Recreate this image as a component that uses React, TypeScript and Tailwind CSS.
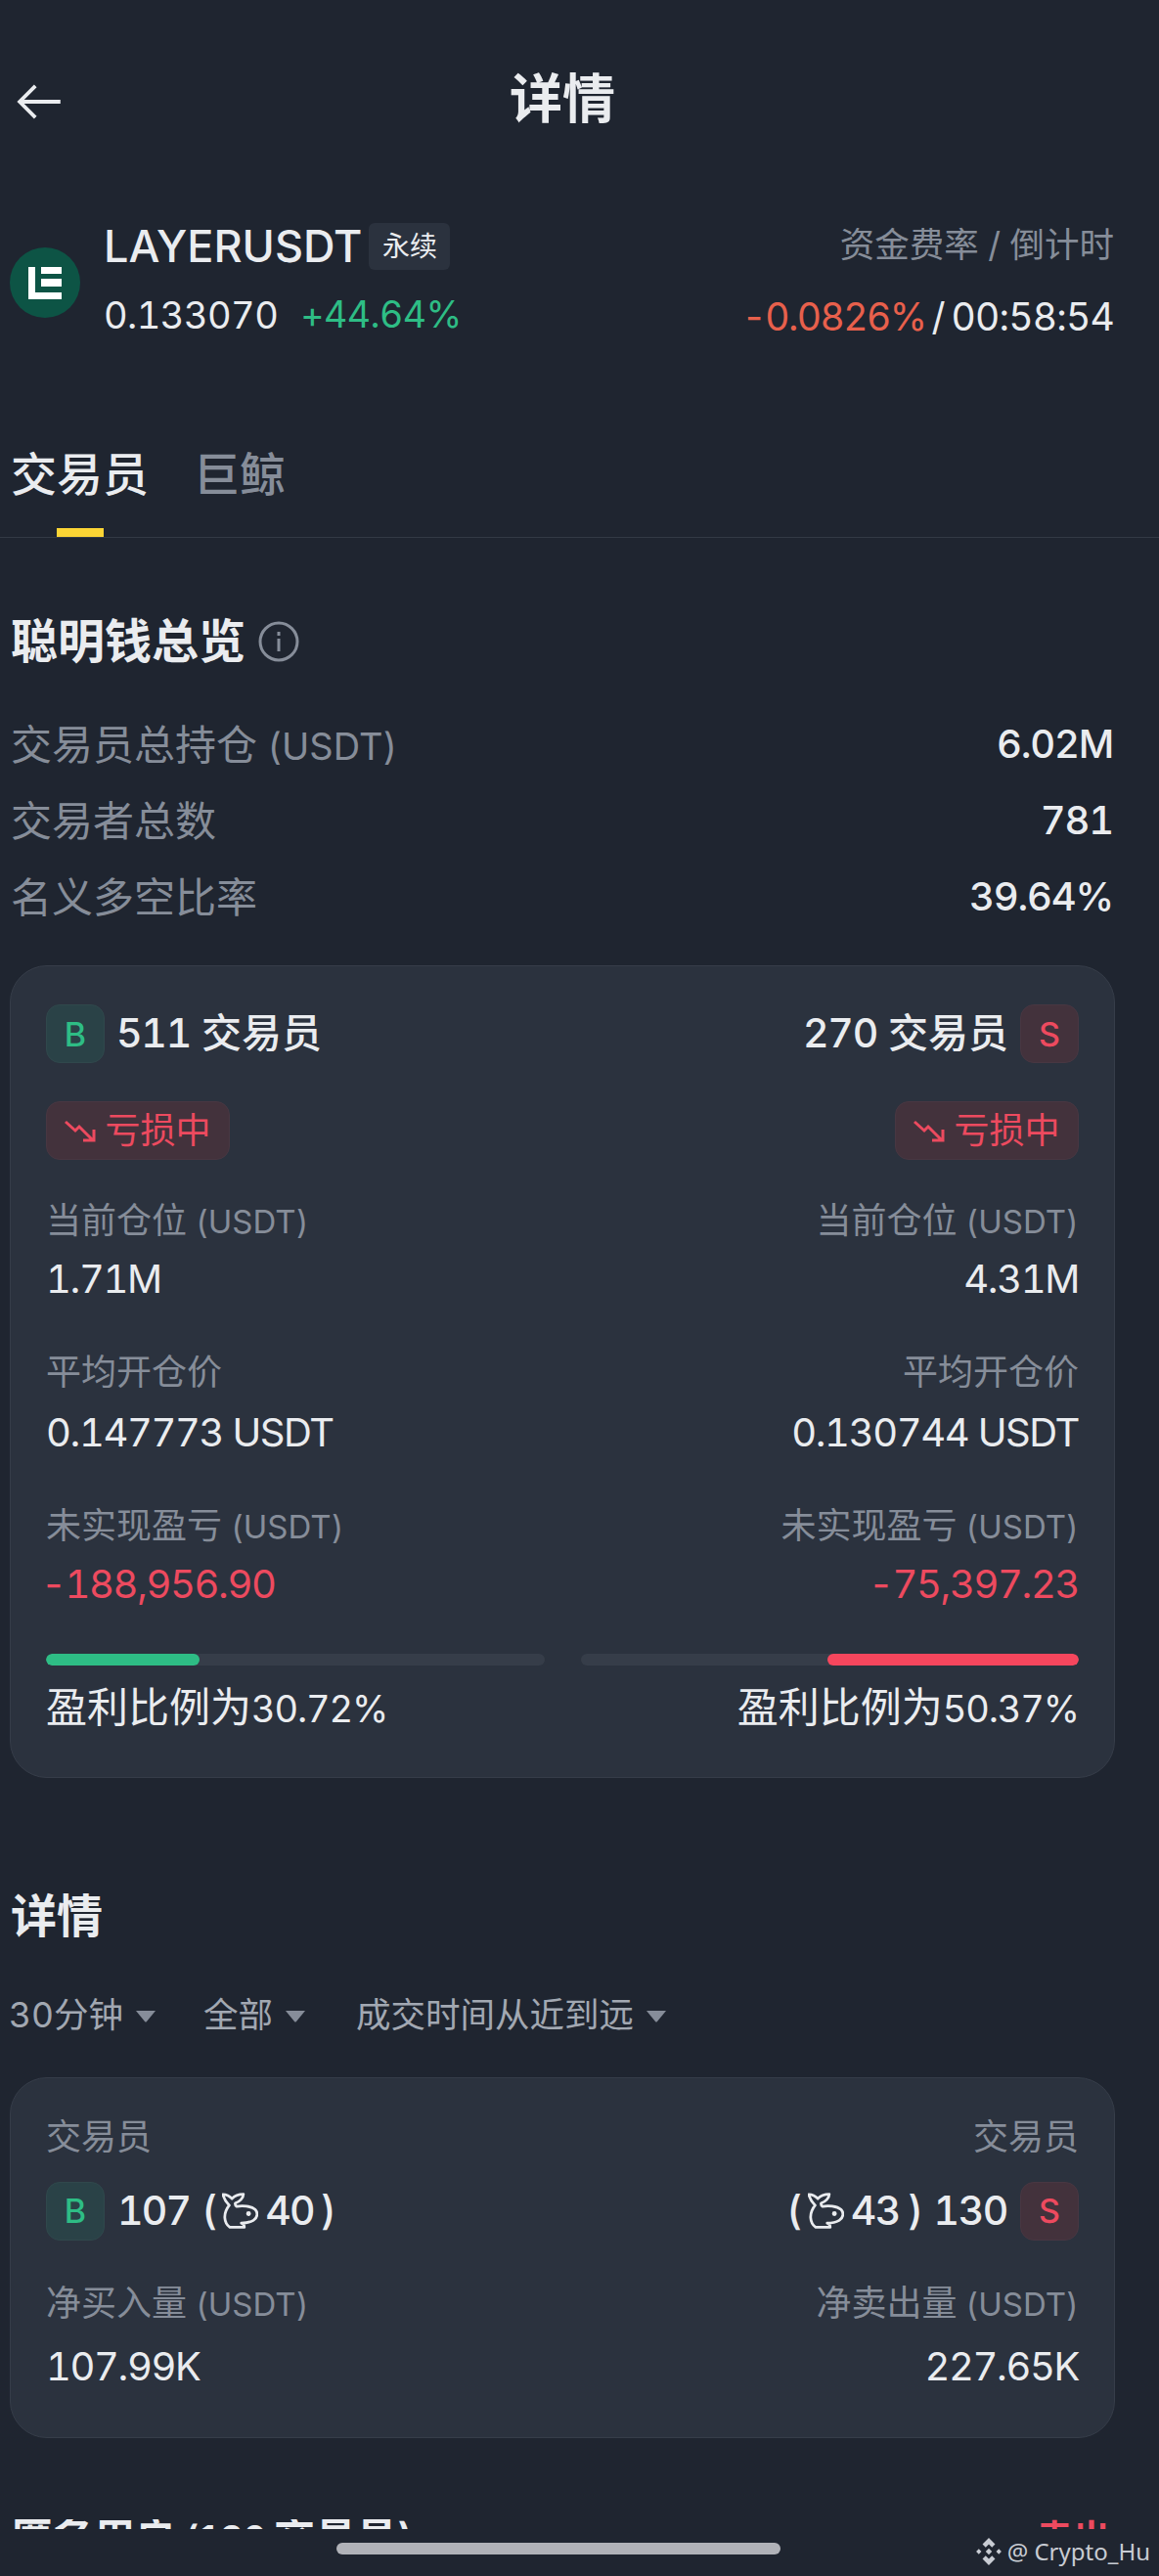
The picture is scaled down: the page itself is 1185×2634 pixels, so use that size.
const font = "font-['Inter','Noto_Sans_CJK_SC',sans-serif] tabular-nums";

function Whale() {
  return (
    <svg viewBox="0 0 120 120" className="w-[37px] h-[37px] inline-block" fill="none" stroke="#eaecef" strokeWidth="9" strokeLinejoin="round" strokeLinecap="round">
      <path d="M3 6 C14 6 25 11 33 20 C42 10 56 5 71 5 C71 18 58 30 44 35 C43 40 45 44 49 46 C66 42 96 44 110 56 C120 66 118 84 104 92 C92 99 78 101 64 101 C70 103 74 107 74 115 L26 115 C6 100 2 70 24 42 C14 32 6 20 3 6 Z" />
      <circle cx="88" cy="70" r="3.5" fill="#eaecef" />
    </svg>
  );
}

function SideBadge({ side }: { side: "B" | "S" }) {
  return (
    <div
      className={`w-[60px] h-[60px] rounded-[14px] flex items-center justify-center text-[34px] font-medium border ${
        side === "B"
          ? "bg-[#2a4247] border-[#30484c] text-[#2ebd85]"
          : "bg-[#43323c] border-[#483742] text-[#ed4a5f]"
      }`}
    >
      {side}
    </div>
  );
}

function LossTag() {
  return (
    <div className="h-[60px] w-[188px] rounded-[14px] bg-[#43323c] border border-[#483742] flex items-center justify-center gap-[7px] text-[36px] text-[#ed4a5f]">
      <svg viewBox="0 0 34 24" className="w-[34px] h-[24px]" fill="none" stroke="#ed4a5f" strokeWidth="3">
        <path d="M1 3 L11 12 L15 8 L28 21 M30 11 V22 H19" />
      </svg>
      亏损中
    </div>
  );
}

function Stat({ label, unit, value, right, red, mt, valueMt }: { label: string; unit?: boolean; value: string; right?: boolean; red?: boolean; mt?: string; valueMt?: string }) {
  return (
    <div className={`flex flex-col ${right ? "items-end" : "items-start"} ${mt ?? ""}`}>
      <div className="h-[44px] leading-[44px] text-[36px] text-[#868d99] whitespace-nowrap">
        {label}
        {unit && <span className="text-[33px]"> (USDT)</span>}
      </div>
      <div className={`h-[48px] leading-[48px] ${valueMt ?? "mt-[14px]"} text-[40px] tracking-[-0.035em] whitespace-nowrap ${red ? "text-[#ed4a5f]" : "text-[#eaecef]"} ${red && !right ? "-ml-[5px]" : ""}`}>{value}</div>
    </div>
  );
}

function SideColumn({ right, count, current, avg, pnl }: { right?: boolean; count: string; current: string; avg: string; pnl: string }) {
  const text = (
    <span>
      <span className="tracking-[-0.03em]">{count}</span> 交易员
    </span>
  );
  return (
    <div className={`flex flex-col ${right ? "items-end" : "items-start"}`}>
      <div className="flex items-center gap-[12px] text-[41px] font-medium text-[#eaecef] h-[60px]">
        {right ? (
          <>
            {text}
            <SideBadge side="S" />
          </>
        ) : (
          <>
            <SideBadge side="B" />
            {text}
          </>
        )}
      </div>
      <div className="mt-[39px]">
        <LossTag />
      </div>
      <Stat right={right} unit mt="mt-[40px]" label="当前仓位" value={current} />
      <Stat right={right} mt="mt-[49px]" valueMt="mt-[16px]" label="平均开仓价" value={avg} />
      <Stat right={right} unit mt="mt-[49px]" label="未实现盈亏" value={pnl} red />
    </div>
  );
}

function Ratio({ value }: { value: string }) {
  return (
    <span className="text-[42px]">
      盈利比例为<span className="text-[38px] tracking-[-0.03em]">{value}</span>
    </span>
  );
}

function Filter({ text, className }: { text: string; className?: string }) {
  return (
    <div className={`flex items-center gap-[12px] text-[35.5px] text-[#a2a8b2] ${className ?? ""}`}>
      {text}
      <svg viewBox="0 0 22 13" className="w-[22px] h-[13px]" fill="#868d99">
        <path d="M1 1 H21 L12 12 Q11 13 10 12 Z" />
      </svg>
    </div>
  );
}

function OverviewRow({ label, unit, value }: { label: string; unit?: boolean; value: string }) {
  return (
    <div className="flex justify-between h-[50px] items-center">
      <span className="text-[42px] text-[#868d99]">
        {label}
        {unit && <span className="text-[38px]"> (USDT)</span>}
      </span>
      <span className="text-[40px] tracking-[-0.03em] font-medium text-[#eaecef]">{value}</span>
    </div>
  );
}

export default function App() {
  return (
    <div className={`relative w-[1185px] h-[2634px] overflow-hidden bg-[#1f2530] ${font}`}>
      {/* header */}
      <div className="h-[209px] relative flex justify-center pt-[69px] pr-[35px]">
        <svg viewBox="0 0 48 38" className="absolute left-[17px] top-[86px] w-[46px] h-[36px]" fill="none" stroke="#eaecef" strokeWidth="4">
          <path d="M47 19 H3 M20 2 L3 19 L20 36" />
        </svg>
        <div className="text-[54px] leading-[66px] font-semibold text-[#eaecef]">详情</div>
      </div>

      {/* symbol row */}
      <div className="h-[170px] flex justify-between pl-[10px] pr-[46px] pt-[3px]">
        <div className="flex items-center gap-[24px] h-[143px]">
          <svg viewBox="0 0 72 72" className="w-[72px] h-[72px] mt-[10px]">
            <circle cx="36" cy="36" r="36" fill="#0d5445" />
            <path d="M19 20 H26 V46 H53 V53 H19 Z M32 20 H53 V27 H32 Z M32 32 H53 V40 H32 Z" fill="#fff" />
          </svg>
          <div className="flex flex-col">
            <div className="flex items-center gap-[7px] h-[74px]">
              <span className="text-[45px] font-medium text-[#eaecef]">LAYERUSDT</span>
              <span className="h-[48px] w-[83px] rounded-[6px] bg-[#2b323e] flex items-center justify-center text-[28px] text-[#eaecef]">永续</span>
            </div>
            <div className="flex items-center gap-[23px] mt-[4px] tracking-[-0.035em] h-[60px]">
              <span className="text-[38px] text-[#eaecef]">0.133070</span>
              <span className="text-[37.5px] text-[#2ebd85]">+44.64%</span>
            </div>
          </div>
        </div>
        <div className="flex flex-col items-end pt-[2px]">
          <div className="h-[74px] leading-[74px] text-[35.5px] text-[#868d99]">资金费率 / 倒计时</div>
          <div className="flex items-center mt-[7px] text-[39px]">
            <span className="text-[#e8604c] tracking-[-0.04em]">-0.0826%</span>
            <span className="text-[#eaecef] mx-[6px]">/</span>
            <span className="text-[#eaecef] tracking-[-0.02em]">00:58:54</span>
          </div>
        </div>
      </div>

      {/* tabs */}
      <div className="h-[171px] border-b border-[#333a45] flex items-start gap-[46px] pl-[11px] pt-[76px] relative">
        <div className="text-[47px] leading-[60px] font-medium text-[#eaecef]">交易员</div>
        <div className="text-[47px] leading-[60px] font-medium text-[#868d99]">巨鲸</div>
        <div className="absolute left-[58px] bottom-0 w-[48px] h-[9px] bg-[#fcd535]" />
      </div>

      {/* overview */}
      <div className="pl-[11px] pr-[47px] pt-[76px]">
        <div className="flex items-center gap-[13px] h-[60px]">
          <div className="text-[48px] font-semibold text-[#eaecef]">聪明钱总览</div>
          <svg viewBox="0 0 42 42" className="w-[42px] h-[42px]" fill="none" stroke="#868d99" strokeWidth="3">
            <circle cx="21" cy="21" r="19" />
            <path d="M21 18 V31 M21 11 V15" />
          </svg>
        </div>
        <div className="mt-[50px] flex flex-col gap-[28px]">
          <OverviewRow label="交易员总持仓" unit value="6.02M" />
          <OverviewRow label="交易者总数" value="781" />
          <OverviewRow label="名义多空比率" value="39.64%" />
        </div>
      </div>

      <div className="mx-[10px] w-[1130px] mt-[45px] h-[831px] rounded-[38px] bg-[#2b323e] border border-[#363d49] px-[36px] pt-[39px]">
        <div className="flex justify-between">
          <SideColumn count="511" current="1.71M" avg="0.147773 USDT" pnl="-188,956.90" />
          <SideColumn right count="270" current="4.31M" avg="0.130744 USDT" pnl="-75,397.23" />
        </div>
        <div className="flex gap-[37px] mt-[47px]">
          <div className="flex-1 h-[12px] rounded-full bg-[#363d49] overflow-hidden">
            <div className="h-full w-[157px] rounded-full bg-[#2ebd85]" />
          </div>
          <div className="flex-1 h-[12px] rounded-full bg-[#363d49] overflow-hidden flex justify-end">
            <div className="h-full w-[257px] rounded-full bg-[#f6465d]" />
          </div>
        </div>
        <div className="flex justify-between mt-[11px] text-[#eaecef]">
          <Ratio value="30.72%" />
          <Ratio value="50.37%" />
        </div>
      </div>

      {/* details */}
      <div className="pl-[11px] mt-[111px] text-[47px] leading-[60px] font-semibold text-[#eaecef]">详情</div>
      <div className="pl-[9px] mt-[47px] flex gap-[48px] h-[50px] items-center">
        <Filter text="30分钟" />
        <Filter text="全部" />
        <Filter text="成交时间从近到远" className="ml-[3px]" />
      </div>

      <div className="mx-[10px] w-[1130px] mt-[38px] h-[369px] rounded-[38px] bg-[#2b323e] border border-[#363d49] px-[36px] pt-[38px] flex justify-between">
        <div className="flex flex-col items-start">
          <div className="h-[44px] leading-[44px] text-[36px] text-[#868d99]">交易员</div>
          <div className="flex items-center gap-[13px] mt-[23px] text-[41px] font-medium text-[#eaecef]">
            <SideBadge side="B" />
            <span className="flex items-center tracking-[-0.045em]">
              <span>107</span>
              <span className="ml-[12px]">(</span>
              <span className="mx-[7px] flex"><Whale /></span>
              <span>40</span>
              <span className="ml-[7px]">)</span>
            </span>
          </div>
          <Stat unit mt="mt-[41px]" valueMt="mt-[19px]" label="净买入量" value="107.99K" />
        </div>
        <div className="flex flex-col items-end">
          <div className="h-[44px] leading-[44px] text-[36px] text-[#868d99]">交易员</div>
          <div className="flex items-center gap-[13px] mt-[23px] text-[41px] font-medium text-[#eaecef]">
            <span className="flex items-center tracking-[-0.035em]">
              <span>(</span>
              <span className="mx-[7px] flex"><Whale /></span>
              <span>43</span>
              <span className="ml-[8px] mr-[12px]">)</span>
              <span>130</span>
            </span>
            <SideBadge side="S" />
          </div>
          <Stat unit right mt="mt-[41px]" valueMt="mt-[19px]" label="净卖出量" value="227.65K" />
        </div>
      </div>

      <div className="mt-[83px] h-[10px] overflow-hidden pl-[12px] pr-[50px] flex justify-between items-start leading-[60px] font-semibold">
        <span className="-mt-[11px] text-[42px] text-[#eaecef]">
          匿名用户<span className="text-[38px] tracking-[-0.04em]"> (130 </span>交易员)
        </span>
        <span className="-mt-[11px] text-[38px] text-[#ed4a5f]">卖出</span>
      </div>

      {/* home bar + watermark */}
      <div className="absolute left-[344px] top-[2600px] w-[454px] h-[12px] rounded-full bg-[#b0b2b8]" />
      <div className="absolute right-[9px] top-[2591px] flex items-center gap-[5px] text-[24px] leading-[36px] text-[#c8ccd3] font-['Noto_Sans',sans-serif]">
        <svg viewBox="0 0 24 26" className="w-[28px] h-[28px]" fill="#c8ccd3">
          <path d="M12 0 L18 6 L15 9 L12 6 L9 9 L6 6 Z M0 13 L2.5 10.5 L5 13 L2.5 15.5 Z M19 13 L21.5 10.5 L24 13 L21.5 15.5 Z M12 10 L15 13 L12 16 L9 13 Z M12 26 L6 20 L9 17 L12 20 L15 17 L18 20 Z" />
        </svg>
        <span>@ Crypto_Hu</span>
      </div>
    </div>
  );
}
